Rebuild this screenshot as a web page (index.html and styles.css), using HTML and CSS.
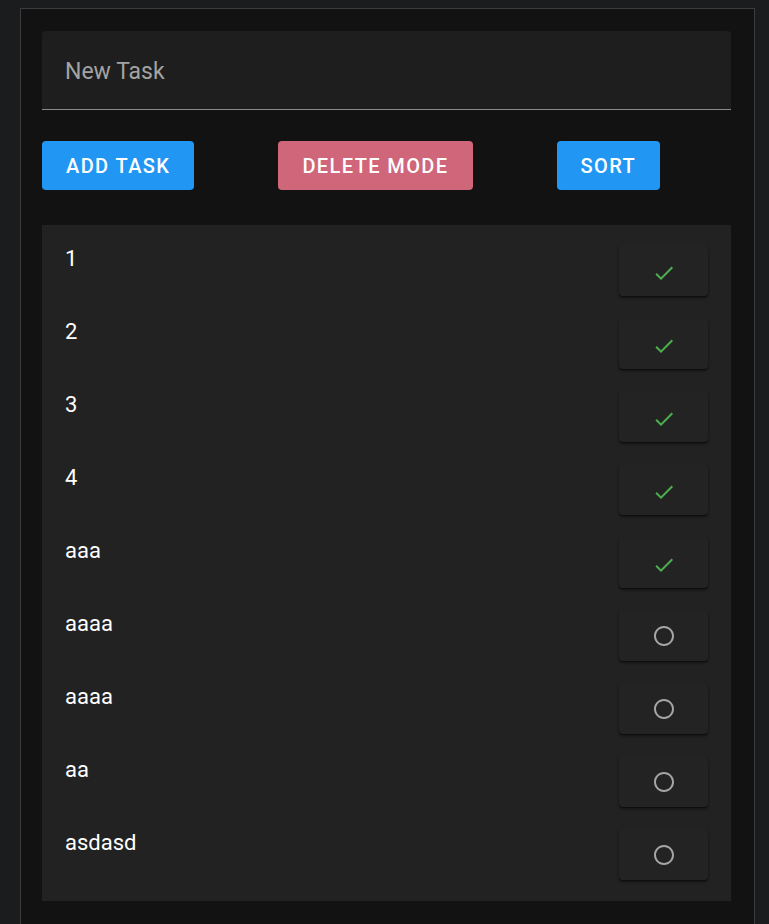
FILE: index.html
```html
<!DOCTYPE html>
<html lang="en">
<head>
<meta charset="utf-8">
<title>Tasks</title>
<link rel="stylesheet" href="styles.css">
</head>
<body>
<div class="app">
  <div class="field">
    <input class="field-input" type="text" placeholder="New Task">
  </div>
  <div class="actions">
    <button class="btn btn-blue">Add Task</button>
    <button class="btn btn-pink">Delete Mode</button>
    <button class="btn btn-blue">Sort</button>
  </div>
  <ul class="list">
    <li class="item"><span class="item-text">1</span><span class="toggle"><svg class="icon check" viewBox="0 0 24 24"><path d="M9 16.17L4.83 12l-1.42 1.41L9 19 21 7l-1.41-1.41z"/></svg></span></li>
    <li class="item"><span class="item-text">2</span><span class="toggle"><svg class="icon check" viewBox="0 0 24 24"><path d="M9 16.17L4.83 12l-1.42 1.41L9 19 21 7l-1.41-1.41z"/></svg></span></li>
    <li class="item"><span class="item-text">3</span><span class="toggle"><svg class="icon check" viewBox="0 0 24 24"><path d="M9 16.17L4.83 12l-1.42 1.41L9 19 21 7l-1.41-1.41z"/></svg></span></li>
    <li class="item"><span class="item-text">4</span><span class="toggle"><svg class="icon check" viewBox="0 0 24 24"><path d="M9 16.17L4.83 12l-1.42 1.41L9 19 21 7l-1.41-1.41z"/></svg></span></li>
    <li class="item"><span class="item-text">aaa</span><span class="toggle"><svg class="icon check" viewBox="0 0 24 24"><path d="M9 16.17L4.83 12l-1.42 1.41L9 19 21 7l-1.41-1.41z"/></svg></span></li>
    <li class="item"><span class="item-text">aaaa</span><span class="toggle"><svg class="icon circle" viewBox="0 0 24 24"><path d="M12 2C6.48 2 2 6.48 2 12s4.48 10 10 10 10-4.48 10-10S17.52 2 12 2zm0 18c-4.42 0-8-3.58-8-8s3.58-8 8-8 8 3.58 8 8-3.58 8-8 8z"/></svg></span></li>
    <li class="item"><span class="item-text">aaaa</span><span class="toggle"><svg class="icon circle" viewBox="0 0 24 24"><path d="M12 2C6.48 2 2 6.48 2 12s4.48 10 10 10 10-4.48 10-10S17.52 2 12 2zm0 18c-4.42 0-8-3.58-8-8s3.58-8 8-8 8 3.58 8 8-3.58 8-8 8z"/></svg></span></li>
    <li class="item"><span class="item-text">aa</span><span class="toggle"><svg class="icon circle" viewBox="0 0 24 24"><path d="M12 2C6.48 2 2 6.48 2 12s4.48 10 10 10 10-4.48 10-10S17.52 2 12 2zm0 18c-4.42 0-8-3.58-8-8s3.58-8 8-8 8 3.58 8 8-3.58 8-8 8z"/></svg></span></li>
    <li class="item"><span class="item-text">asdasd</span><span class="toggle"><svg class="icon circle" viewBox="0 0 24 24"><path d="M12 2C6.48 2 2 6.48 2 12s4.48 10 10 10 10-4.48 10-10S17.52 2 12 2zm0 18c-4.42 0-8-3.58-8-8s3.58-8 8-8 8 3.58 8 8-3.58 8-8 8z"/></svg></span></li>
  </ul>
</div>
</body>
</html>
```
FILE: styles.css
```css
* { box-sizing: border-box; }

html, body {
  margin: 0;
  background: #1b1c1e;
  font-family: Roboto, "Liberation Sans", Arial, sans-serif;
  color: #fff;
}

body {
  padding: 8px 0 0 20px;
}

.app {
  width: 735px;
  background: #121212;
  border: 1px solid #3c3c3e;
  padding: 22px 23px 60px 21px;
}

.field {
  background: #1e1e1e;
  border-radius: 4px 4px 0 0;
  border-bottom: 1px solid #8a8a8a;
}

.field-input {
  display: block;
  width: 100%;
  height: 78px;
  padding: 2px 23px 0;
  border: none;
  outline: none;
  background: transparent;
  font-family: Roboto, "Liberation Sans", Arial, sans-serif;
  font-size: 23px;
  color: #fff;
}

.field-input::placeholder {
  color: #a3a3a3;
  opacity: 1;
}

.actions {
  display: flex;
  gap: 84px;
  margin-top: 31px;
}

.btn {
  height: 49px;
  padding: 0 24px;
  border: none;
  border-radius: 4px;
  font-family: Roboto, "Liberation Sans", Arial, sans-serif;
  font-size: 20px;
  font-weight: 500;
  letter-spacing: 1.4px;
  text-transform: uppercase;
  color: #fff;
}

.btn-blue { background: #2196f3; }
.btn-pink { background: #cf6679; }

.list {
  list-style: none;
  margin: 35px 0 0;
  padding: 10px 0 9px;
  background: #222222;
}

.item {
  display: flex;
  justify-content: space-between;
  align-items: flex-start;
  height: 73px;
  padding: 0 23px 0 23px;
}

.item-text {
  margin-top: 11px;
  font-size: 22px;
  line-height: 26px;
  color: #fff;
}

.toggle {
  display: flex;
  align-items: center;
  justify-content: center;
  width: 89px;
  height: 51px;
  margin-top: 10px;
  background: #232323;
  border-radius: 4px;
  box-shadow: 0 2px 3px rgba(0, 0, 0, 0.45), 0 1px 1px rgba(0, 0, 0, 0.3);
}

.icon {
  width: 24px;
  height: 24px;
}

.check { fill: #4caf50; margin-top: 4px; }
.circle { fill: #a6a6a6; }
```
